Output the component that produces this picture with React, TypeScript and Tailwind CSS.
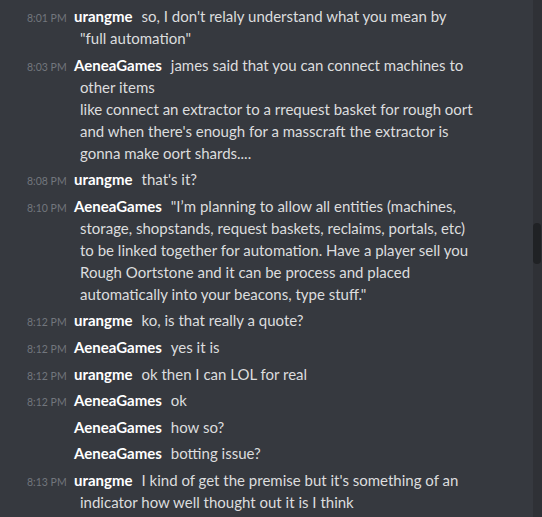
type Message = {
  time?: string;
  author: string;
  lines: string[];
};

const MESSAGES: Message[] = [
  { time: "8:01 PM", author: "urangme", lines: ["so, I don't relaly understand what you mean by", "\"full automation\""] },
  {
    time: "8:03 PM",
    author: "AeneaGames",
    lines: [
      "james said that you can connect machines to",
      "other items",
      "like connect an extractor to a rrequest basket for rough oort",
      "and when there's enough for a masscraft the extractor is",
      "gonna make oort shards....",
    ],
  },
  { time: "8:08 PM", author: "urangme", lines: ["that's it?"] },
  {
    time: "8:10 PM",
    author: "AeneaGames",
    lines: [
      "\"I’m planning to allow all entities (machines,",
      "storage, shopstands, request baskets, reclaims, portals, etc)",
      "to be linked together for automation. Have a player sell you",
      "Rough Oortstone and it can be process and placed",
      "automatically into your beacons, type stuff.\"",
    ],
  },
  { time: "8:12 PM", author: "urangme", lines: ["ko, is that really a quote?"] },
  { time: "8:12 PM", author: "AeneaGames", lines: ["yes it is"] },
  { time: "8:12 PM", author: "urangme", lines: ["ok then I can LOL for real"] },
  { time: "8:12 PM", author: "AeneaGames", lines: ["ok"] },
  { author: "AeneaGames", lines: ["how so?"] },
  { author: "AeneaGames", lines: ["botting issue?"] },
  {
    time: "8:13 PM",
    author: "urangme",
    lines: ["I kind of get the premise but it's something of an", "indicator how well thought out it is I think"],
  },
];

function ChatRow({ msg }: { msg: Message }) {
  const [first, ...rest] = msg.lines;
  return (
    <div className="pt-[4.6px] text-[15px] leading-[22px] text-[#dcddde]">
      <div className="flex h-[22px] items-baseline whitespace-nowrap pl-[27px]">
        <span className="w-[47px] shrink-0 text-[10.5px] text-[#72767d]">{msg.time}</span>
        <span className="mr-[9px] font-bold text-white">{msg.author}</span>
        <span>{first}</span>
      </div>
      {rest.map((line, i) => (
        <div key={i} className="h-[22px] whitespace-nowrap pl-[80px]">
          {line}
        </div>
      ))}
    </div>
  );
}

export default function App() {
  return (
    <div className="flex h-[517px] w-[542px] overflow-hidden bg-[#36393f]" style={{ fontFamily: 'Lato, "Noto Sans", sans-serif' }}>
      <div className="flex-1 pt-[0.4px]">
        {MESSAGES.map((m, i) => (
          <ChatRow key={i} msg={m} />
        ))}
      </div>
      <div className="flex w-[9px] flex-col bg-[#2f3136] pt-[223px]">
        <div className="h-[41px] w-[8px] rounded-full bg-[#202225]" />
      </div>
    </div>
  );
}
